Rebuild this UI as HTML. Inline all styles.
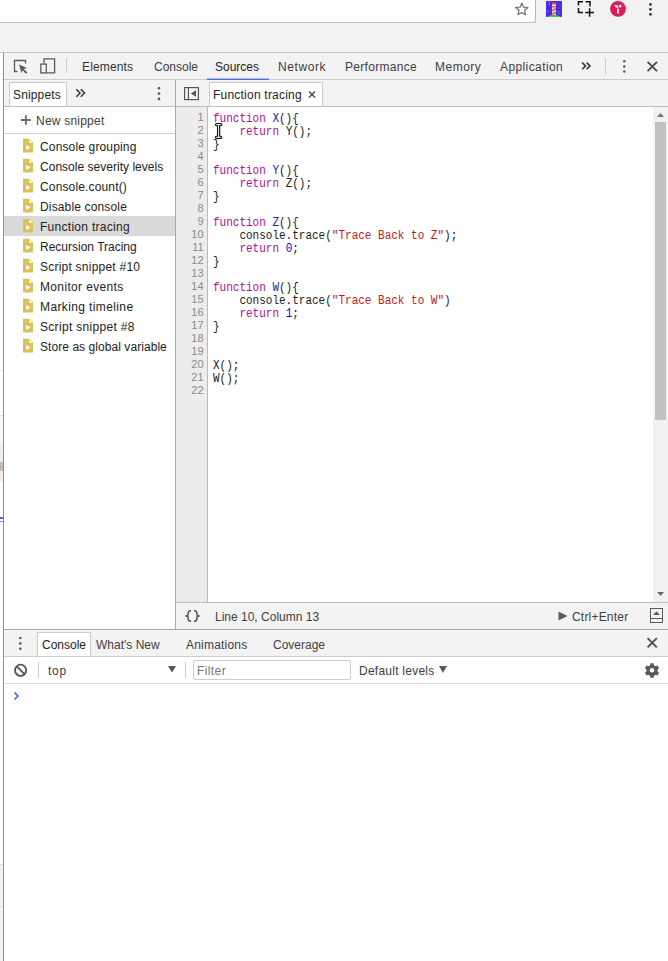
<!DOCTYPE html>
<html><head><meta charset="utf-8">
<style>
*{box-sizing:border-box;margin:0;padding:0}
html,body{width:668px;height:961px;overflow:hidden;background:#f2f2f2;position:relative;font-family:"Liberation Sans",sans-serif;font-size:11px;color:#333}
.a{position:absolute}
.t{position:absolute;white-space:pre;font-family:"Liberation Sans",sans-serif;font-size:12px;line-height:13px;color:#404040}
.hl{position:absolute;height:1px;background:#ccc}
.vl{position:absolute;width:1px;background:#ccc}
.code{position:absolute;font-family:"Liberation Mono",monospace;font-size:11px;line-height:13px;white-space:pre;color:#222}
.kw{color:rgb(178,16,150)}
.df{color:rgb(40,30,170)}
.st{color:rgb(196,26,22)}
.nm{color:rgb(28,0,207)}
svg{position:absolute;overflow:visible}
</style></head><body>
<!-- browser chrome -->
<div class="a" style="left:-6px;top:-6px;width:542px;height:29px;background:#fff;border:1px solid #b8b8b8;border-radius:3px"></div>
<div class="hl" style="left:0;top:22px;width:536px;background:#c2c2c2"></div>

<!-- page strip -->
<div class="a" style="left:0;top:52px;width:3px;height:909px;background:#fff"></div>


<div class="a" style="left:0;top:370px;width:3px;height:1px;background:#e4e4e4"></div>
<div class="a" style="left:0;top:415px;width:3px;height:1px;background:#ddd"></div>
<div class="a" style="left:0;top:416px;width:3px;height:30px;background:#f6f6f6"></div>
<div class="a" style="left:0;top:446px;width:3px;height:36px;background:#eee"></div>
<div class="a" style="left:0;top:462px;width:3px;height:9px;background:#c8b8a8"></div>
<div class="a" style="left:0;top:517px;width:3px;height:2px;background:#5060d0"></div>
<div class="a" style="left:0;top:521px;width:3px;height:1px;background:#8090e0"></div>
<div class="a" style="left:0;top:864px;width:3px;height:97px;background:#f3f3f3"></div><div class="a" style="left:0;top:864px;width:3px;height:1px;background:#d8d8d8"></div><div class="a" style="left:0;top:906px;width:3px;height:1px;background:#e0e0e0"></div>
<!-- devtools -->
<div class="a" style="left:3px;top:52px;width:665px;height:909px;background:#fff"></div>
<div class="vl" style="left:3px;top:52px;height:909px;background:#8f8f8f"></div>
<div class="hl" style="left:0;top:52px;width:668px;background:#c6c6c6"></div>

<!-- main toolbar -->
<div class="a" style="left:4px;top:53px;width:664px;height:26px;background:#f3f3f3"></div>
<div class="hl" style="left:4px;top:79px;width:664px"></div>


<!-- toolbar icons -->
<svg style="left:0;top:0" width="668" height="961">
 <!-- inspect -->
 <path d="M17.5 71.5 H14.5 V60.5 H25.5 V63.5" fill="none" stroke="#5a5a5a" stroke-width="1.3"/>
 <path d="M19 64.5 L27 68 L23.8 69 L27.3 72.5 L26 73.8 L22.5 70.3 L21.5 73.3 Z" fill="#5a5a5a"/>
 <!-- device -->
 <path d="M44 63.5 V58.8 H54.6 V72.8 H46.5" fill="none" stroke="#5a5a5a" stroke-width="1.3"/>
 <rect x="40.8" y="64.1" width="5.5" height="8.8" fill="none" stroke="#5a5a5a" stroke-width="1.3"/>
 <!-- sep -->
 <rect x="66" y="58" width="1" height="15" fill="#ccc"/>
 <!-- >> -->
 <path d="M582.2 62.6 L585.6 65.9 L582.2 69.2 M586.6 62.6 L590 65.9 L586.6 69.2" fill="none" stroke="#3a3a3a" stroke-width="1.6"/>
 <rect x="605" y="58" width="1" height="16" fill="#ccc"/>
 <circle cx="624.3" cy="61.2" r="1.25" fill="#5a5a5a"/><circle cx="624.3" cy="66.4" r="1.25" fill="#5a5a5a"/><circle cx="624.3" cy="71.5" r="1.25" fill="#5a5a5a"/>
 <path d="M647.6 61.8 L657 71.2 M657 61.8 L647.6 71.2" stroke="#4a4a4a" stroke-width="1.9"/>
</svg>
<div class="t" style="left:82px;top:61px;color:#333;letter-spacing:0.15px">Elements</div>
<div class="t" style="left:154px;top:61px">Console</div>
<div class="t" style="left:215px;top:61px;color:#222">Sources</div>
<div class="t" style="left:278px;top:61px;letter-spacing:0.6px">Network</div>
<div class="t" style="left:345px;top:61px;letter-spacing:0.3px">Performance</div>
<div class="t" style="left:435px;top:61px;letter-spacing:0.5px">Memory</div>
<div class="t" style="left:500px;top:61px;letter-spacing:0.4px">Application</div>
<div class="a" style="left:207px;top:78px;width:62px;height:1px;background:#a8b8f0"></div><div class="a" style="left:207px;top:79px;width:62px;height:1px;background:#4d6de8"></div>

<!-- second row toolbars -->
<div class="a" style="left:4px;top:80px;width:664px;height:26px;background:#f3f3f3"></div>
<div class="hl" style="left:4px;top:106px;width:664px;background:#bdbdbd"></div>
<div class="vl" style="left:175px;top:80px;height:549px;background:#a8a8a8"></div>
<div class="a" style="left:9px;top:82px;width:58px;height:24px;background:#fff;border:1px solid #ccc;border-bottom:none"></div>
<div class="t" style="left:13px;top:89px;color:#222;letter-spacing:0.15px">Snippets</div>
<div class="a" style="left:209px;top:82px;width:114px;height:24px;background:#fff;border:1px solid #ccc;border-bottom:none"></div>
<div class="t" style="left:213px;top:89px;color:#222;letter-spacing:0.22px">Function tracing</div>
<svg style="left:0;top:0" width="668" height="961">
 <path d="M76.3 89.3 L80 93 L76.3 96.7 M80.8 89.3 L84.5 93 L80.8 96.7" fill="none" stroke="#3a3a3a" stroke-width="1.6"/>
 <circle cx="159" cy="88.3" r="1.3" fill="#5a5a5a"/><circle cx="159" cy="93.6" r="1.3" fill="#5a5a5a"/><circle cx="159" cy="98.9" r="1.3" fill="#5a5a5a"/>
 <rect x="184.6" y="87.6" width="13.8" height="12" fill="#f8f8f8" stroke="#555" stroke-width="1.2"/>
 <rect x="187.8" y="88" width="1.2" height="11.4" fill="#555"/>
 <path d="M196 90.3 L190.8 93.5 L196 96.7 Z" fill="#555"/>
 <path d="M309 91.5 L315 97.5 M315 91.5 L309 97.5" stroke="#444" stroke-width="1.4"/>
</svg>

<!-- sidebar list -->
<svg style="left:0;top:0" width="668" height="961">
 <path d="M25.9 115.2 V124.8 M21 120 H30.8" stroke="#6a6a6a" stroke-width="1.9"/>
</svg>
<div class="t" style="left:36px;top:115px;letter-spacing:0.22px">New snippet</div>
<div class="hl" style="left:4px;top:133px;width:171px;background:#d0d0d0"></div>
<div class="a" style="left:4px;top:216px;width:171px;height:20px;background:#dadada"></div>
<div class="t" style="left:40px;top:141px;color:#222;letter-spacing:0.15px">Console grouping</div>
<div class="t" style="left:40px;top:161px;color:#222;letter-spacing:0.02px">Console severity levels</div>
<div class="t" style="left:40px;top:181px;color:#222;letter-spacing:0.15px">Console.count()</div>
<div class="t" style="left:40px;top:201px;color:#222;letter-spacing:0.15px">Disable console</div>
<div class="t" style="left:40px;top:221px;color:#222;letter-spacing:0.28px">Function tracing</div>
<div class="t" style="left:40px;top:241px;color:#222;letter-spacing:0.0px">Recursion Tracing</div>
<div class="t" style="left:40px;top:261px;color:#222;letter-spacing:0.23px">Script snippet #10</div>
<div class="t" style="left:40px;top:281px;color:#222;letter-spacing:0.35px">Monitor events</div>
<div class="t" style="left:40px;top:301px;color:#222;letter-spacing:0.38px">Marking timeline</div>
<div class="t" style="left:40px;top:321px;color:#222;letter-spacing:0.31px">Script snippet #8</div>
<div class="t" style="left:40px;top:341px;color:#222;letter-spacing:0.06px">Store as global variable</div>
<svg style="left:0;top:0" width="668" height="961"><path d="M23 138.8 H29.2 L33 142.5 V152.6 H23 Z" fill="#d9c357"/><path d="M29.2 139.6 V142.8 H32.6 Z" fill="#fff"/><path d="M26 145.0 L31 147.4 L26 149.8 Z" fill="#fff"/><path d="M23 158.8 H29.2 L33 162.5 V172.6 H23 Z" fill="#d9c357"/><path d="M29.2 159.6 V162.8 H32.6 Z" fill="#fff"/><path d="M26 165.0 L31 167.4 L26 169.8 Z" fill="#fff"/><path d="M23 178.8 H29.2 L33 182.5 V192.6 H23 Z" fill="#d9c357"/><path d="M29.2 179.6 V182.8 H32.6 Z" fill="#fff"/><path d="M26 185.0 L31 187.4 L26 189.8 Z" fill="#fff"/><path d="M23 198.8 H29.2 L33 202.5 V212.6 H23 Z" fill="#d9c357"/><path d="M29.2 199.6 V202.8 H32.6 Z" fill="#fff"/><path d="M26 205.0 L31 207.4 L26 209.8 Z" fill="#fff"/><path d="M23 218.8 H29.2 L33 222.5 V232.6 H23 Z" fill="#d9c357"/><path d="M29.2 219.6 V222.8 H32.6 Z" fill="#fff"/><path d="M26 225.0 L31 227.4 L26 229.8 Z" fill="#fff"/><path d="M23 238.8 H29.2 L33 242.5 V252.6 H23 Z" fill="#d9c357"/><path d="M29.2 239.6 V242.8 H32.6 Z" fill="#fff"/><path d="M26 245.0 L31 247.4 L26 249.8 Z" fill="#fff"/><path d="M23 258.8 H29.2 L33 262.5 V272.6 H23 Z" fill="#d9c357"/><path d="M29.2 259.6 V262.8 H32.6 Z" fill="#fff"/><path d="M26 265.0 L31 267.4 L26 269.8 Z" fill="#fff"/><path d="M23 278.8 H29.2 L33 282.5 V292.6 H23 Z" fill="#d9c357"/><path d="M29.2 279.6 V282.8 H32.6 Z" fill="#fff"/><path d="M26 285.0 L31 287.4 L26 289.8 Z" fill="#fff"/><path d="M23 298.8 H29.2 L33 302.5 V312.6 H23 Z" fill="#d9c357"/><path d="M29.2 299.6 V302.8 H32.6 Z" fill="#fff"/><path d="M26 305.0 L31 307.4 L26 309.8 Z" fill="#fff"/><path d="M23 318.8 H29.2 L33 322.5 V332.6 H23 Z" fill="#d9c357"/><path d="M29.2 319.6 V322.8 H32.6 Z" fill="#fff"/><path d="M26 325.0 L31 327.4 L26 329.8 Z" fill="#fff"/><path d="M23 338.8 H29.2 L33 342.5 V352.6 H23 Z" fill="#d9c357"/><path d="M29.2 339.6 V342.8 H32.6 Z" fill="#fff"/><path d="M26 345.0 L31 347.4 L26 349.8 Z" fill="#fff"/></svg>

<!-- editor -->
<div class="a" style="left:176px;top:107px;width:31px;height:495px;background:#ececec"></div>
<div class="vl" style="left:207px;top:107px;height:495px;background:#bbb"></div>
<div class="code" style="left:176px;top:111px;width:27.6px;text-align:right;color:#8a8a8a;font-family:'Liberation Sans',sans-serif;-webkit-text-stroke:0">1
2
3
4
5
6
7
8
9
10
11
12
13
14
15
16
17
18
19
20
21
22</div>
<div class="code" style="left:213px;top:113px;font-size:12px;transform:scaleX(0.9167);transform-origin:0 0"><span class="kw">function</span> <span class="df">X</span>(){
    <span class="kw">return</span> Y();
}

<span class="kw">function</span> <span class="df">Y</span>(){
    <span class="kw">return</span> Z();
}

<span class="kw">function</span> <span class="df">Z</span>(){
    console.trace(<span class="st">"Trace Back to Z"</span>);
    <span class="kw">return</span> <span class="nm">0</span>;
}

<span class="kw">function</span> <span class="df">W</span>(){
    console.trace(<span class="st">"Trace Back to W"</span>)
    <span class="kw">return</span> <span class="nm">1</span>;
}


X();
W();
</div>
<!-- cursor I-beam -->
<svg style="left:0;top:0" width="668" height="961">
 <path d="M216.5 124.6 H220.8 M218.6 124.6 V137.3 M216.5 137.3 H220.8" fill="none" stroke="#111" stroke-width="3.3" stroke-linecap="round" stroke-linejoin="round"/>
 <path d="M216.5 124.6 H220.8 M218.6 124.6 V137.3 M216.5 137.3 H220.8" fill="none" stroke="#fff" stroke-width="1" stroke-linecap="round"/>
</svg>
<!-- scrollbar -->
<div class="a" style="left:653px;top:107px;width:15px;height:495px;background:#f1f1f1"></div>
<div class="a" style="left:655px;top:122px;width:11px;height:298px;background:#c1c1c1"></div>
<svg style="left:0;top:0" width="668" height="961">
 <path d="M657 117 L660.5 113 L664 117 Z" fill="#777"/>
 <path d="M657 592 L660.5 596 L664 592 Z" fill="#666"/>
</svg>

<!-- status bar -->
<div class="hl" style="left:176px;top:602px;width:492px;background:#bdbdbd"></div>
<div class="a" style="left:176px;top:603px;width:492px;height:26px;background:#f3f3f3"></div>
<svg style="left:0;top:0" width="668" height="961"><path d="M191 610.8 C188.8 610.8 188.2 611.4 188.2 613 V614.3 C188.2 615.3 187.4 615.9 185.3 615.9 C187.4 615.9 188.2 616.6 188.2 617.6 V619 C188.2 620.7 188.8 621.2 191 621.2 M194 610.8 C196.2 610.8 196.8 611.4 196.8 613 V614.3 C196.8 615.3 197.6 615.9 199.7 615.9 C197.6 615.9 196.8 616.6 196.8 617.6 V619 C196.8 620.7 196.2 621.2 194 621.2" fill="none" stroke="#555" stroke-width="1.5"/></svg>
<div class="t" style="left:215px;top:611px">Line 10, Column 13</div>
<svg style="left:0;top:0" width="668" height="961">
 <path d="M558.5 611.5 L567.5 616 L558.5 620.5 Z" fill="#5a5a5a"/>
 <rect x="650.5" y="608.5" width="12" height="14" fill="none" stroke="#5a5a5a" stroke-width="1"/>
 <path d="M653 615 L656.5 611.2 L660 615 Z" fill="#5a5a5a"/>
 <rect x="651" y="618" width="11" height="1" fill="#5a5a5a"/>
</svg>
<div class="t" style="left:572px;top:611px;letter-spacing:0.2px">Ctrl+Enter</div>

<!-- drawer -->
<div class="hl" style="left:4px;top:629px;width:664px;background:#a8a8a8"></div>
<div class="a" style="left:4px;top:630px;width:664px;height:26px;background:#f3f3f3"></div>
<div class="hl" style="left:4px;top:656px;width:664px"></div>
<div class="a" style="left:37px;top:632px;width:54px;height:24px;background:#fff;border:1px solid #ccc;border-bottom:none"></div>
<div class="t" style="left:42px;top:639px;color:#222">Console</div>
<div class="t" style="left:96px;top:639px">What's New</div>
<div class="t" style="left:186px;top:639px;letter-spacing:0.2px">Animations</div>
<div class="t" style="left:273px;top:639px">Coverage</div>
<svg style="left:0;top:0" width="668" height="961">
 <circle cx="20.3" cy="638" r="1.3" fill="#5a5a5a"/><circle cx="20.3" cy="643.4" r="1.3" fill="#5a5a5a"/><circle cx="20.3" cy="648.8" r="1.3" fill="#5a5a5a"/>
 <path d="M647.6 638.2 L656.8 647.4 M656.8 638.2 L647.6 647.4" stroke="#4f4f4f" stroke-width="1.9"/>
</svg>
<!-- console toolbar -->
<div class="hl" style="left:4px;top:683px;width:664px;background:#ddd"></div>
<svg style="left:0;top:0" width="668" height="961">
 <circle cx="20.6" cy="670.3" r="5.6" fill="none" stroke="#555" stroke-width="1.8"/>
 <path d="M16.7 666.4 L24.5 674.2" stroke="#555" stroke-width="1.8"/>
 <rect x="38" y="662" width="1" height="16" fill="#ccc"/>
 <path d="M168 666 H176 L172 672.5 Z" fill="#555"/>
 <rect x="185" y="662" width="1" height="16" fill="#ccc"/>
 <path d="M439 666 H447 L443 673 Z" fill="#5a5a5a"/>
 <path d="M650.5 663.3 h3 l0.5 2 l1.6 0.9 l2 -0.6 l1.5 2.6 l-1.5 1.4 v1.8 l1.5 1.4 l-1.5 2.6 l-2 -0.6 l-1.6 0.9 l-0.5 2 h-3 l-0.5 -2 l-1.6 -0.9 l-2 0.6 l-1.5 -2.6 l1.5 -1.4 v-1.8 l-1.5 -1.4 l1.5 -2.6 l2 0.6 l1.6 -0.9 Z" fill="#5a5a5a"/>
 <circle cx="652" cy="670.2" r="2.2" fill="#fff"/>
 <path d="M14.6 692.6 L18 696 L14.6 699.4" fill="none" stroke="#3f62ee" stroke-width="1.5"/>
</svg>
<div class="t" style="left:48px;top:665px;letter-spacing:0.7px">top</div>
<div class="a" style="left:193px;top:660px;width:158px;height:20px;border:1px solid #ccc;border-radius:2px;background:#fff"></div>
<div class="t" style="left:197px;top:665px;color:#757575;letter-spacing:0.4px">Filter</div>
<div class="t" style="left:359px;top:665px;letter-spacing:0.25px">Default levels</div>

<!-- browser icons -->
<svg style="left:0;top:0" width="668" height="961">
 <path d="M521.8 3 L523.5 7.2 L528 7.5 L524.6 10.3 L525.6 14.7 L521.8 12.4 L518 14.7 L519 10.3 L515.6 7.5 L520.1 7.2 Z" fill="none" stroke="#6e6e6e" stroke-width="1.2" stroke-linejoin="round"/>
 <rect x="546" y="1" width="16" height="16" fill="#4a2cec"/>
 <path d="M546.5 17 Q554 13.2 561.5 17 Z" fill="#3ccc4a"/>
 <rect x="552" y="3.5" width="4" height="11.5" fill="#d8d0f0"/>
 <path d="M552.3 2.3 H555.7 L556 4.5 H552 Z" fill="#e83a2a"/>
 <rect x="552" y="4.5" width="4" height="1.6" fill="#f5e04a"/>
 <rect x="552" y="6.1" width="4" height="1.4" fill="#f06a2a"/>
 <path d="M552 9.5 L556 7.8 V9.8 L552 11.5 Z M552 13.3 L556 11.6 V13.6 L552 15 Z" fill="#f07030"/>
 <circle cx="549.5" cy="2.6" r="0.6" fill="#8ab0ff"/><circle cx="549.5" cy="4.5" r="0.6" fill="#8ab0ff"/>
 <circle cx="547.5" cy="11.5" r="0.6" fill="#8ab0ff"/><circle cx="558.5" cy="11.5" r="0.6" fill="#8ab0ff"/><circle cx="559.5" cy="13.5" r="0.6" fill="#8ab0ff"/>
 <path d="M578.5 5.5 V1.8 H583 M585.5 1.8 H590 V6.5 M578.5 8 V12.6 H583" fill="none" stroke="#111" stroke-width="1.5"/>
 <path d="M589.6 8.3 V16.8 M585.3 12.6 H594" stroke="#111" stroke-width="1.5"/>
 <circle cx="618" cy="8.9" r="7.9" fill="#dc1a55"/>
 <rect x="617" y="8.7" width="1.9" height="4.6" fill="#fff"/>
 <path d="M614 5.2 L617.2 5 L618.2 7.9 L616 7.6 Z" fill="#fff"/>
 <circle cx="620.1" cy="6.2" r="1.1" fill="#f4c0d0" stroke="#fff" stroke-width="0.7"/>
 <circle cx="650.5" cy="4.4" r="1.4" fill="#333"/><circle cx="650.5" cy="9.3" r="1.4" fill="#333"/><circle cx="650.5" cy="14.3" r="1.4" fill="#333"/>
</svg>
</body></html>
